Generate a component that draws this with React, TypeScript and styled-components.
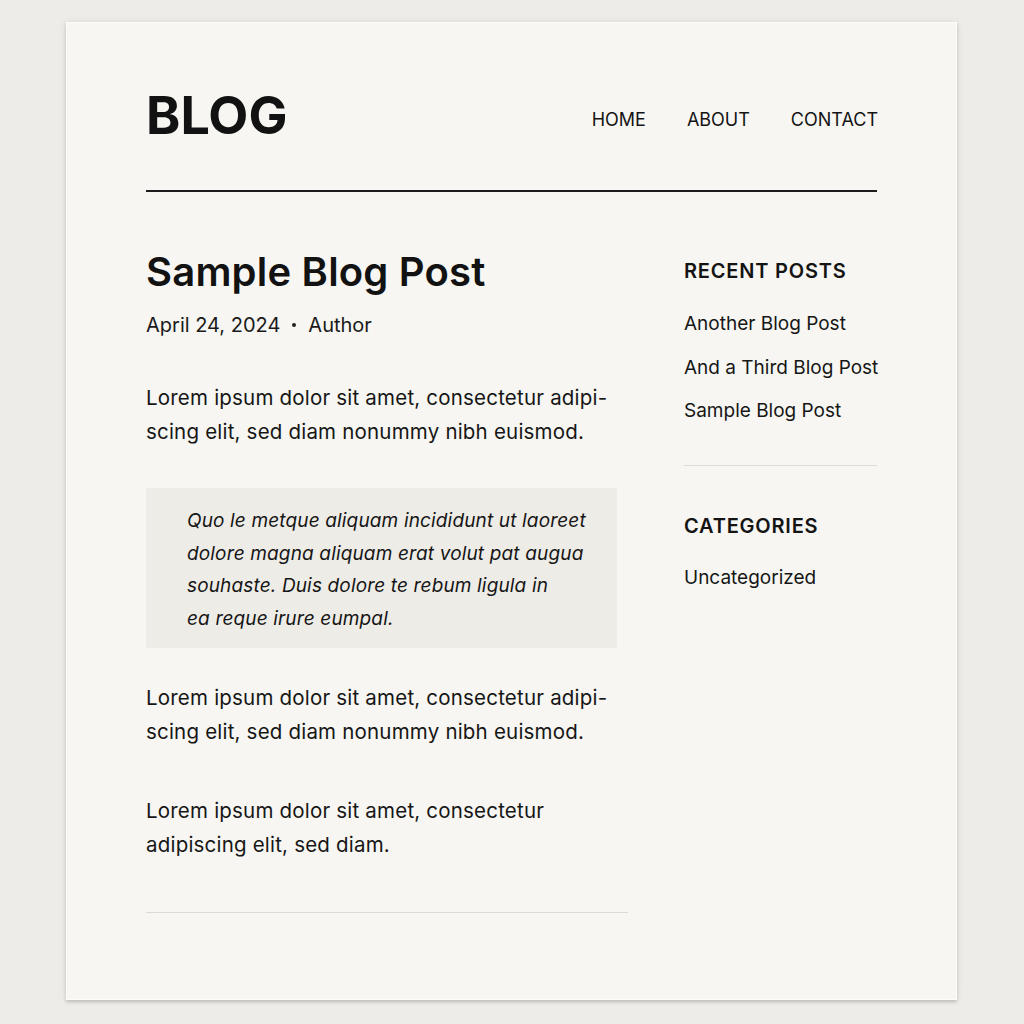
import React from "react";
import styled, { createGlobalStyle } from "styled-components";

const GlobalStyle = createGlobalStyle`
  html, body {
    margin: 0;
    padding: 0;
    background: #eeece8;
  }
  body {
    font-family: Inter, "Noto Sans", "Liberation Sans", sans-serif;
    color: #141414;
    -webkit-font-smoothing: antialiased;
  }
`;

const Page = styled.div`
  padding: 22px 0 24px 66px;
`;

const Card = styled.div`
  box-sizing: border-box;
  width: 891px;
  height: 978px;
  background: #f7f6f2;
  border: 1px solid #fdfdfb;
  box-shadow: 0 2px 3px rgba(60, 55, 45, 0.22), 0 0 8px rgba(60, 55, 45, 0.08);
  padding: 67px 79px 0 79px;
`;

const Header = styled.header`
  display: flex;
  align-items: center;
  justify-content: space-between;
  height: 52px;
  padding-bottom: 48px;
  border-bottom: 2px solid #1c1c1c;
`;

const Logo = styled.h1`
  margin: 0;
  font-size: 52px;
  line-height: 52px;
  font-weight: 700;
  letter-spacing: 0;
  color: #121212;
`;

const Nav = styled.nav`
  display: flex;
  gap: 41px;
  margin-top: 8px;
  margin-right: -1px;
`;

const NavLink = styled.a`
  font-size: 18px;
  line-height: 24px;
  font-weight: 400;
  color: #141414;
  text-decoration: none;
`;

const Layout = styled.div`
  display: grid;
  grid-template-columns: 482px 193px;
  column-gap: 56px;
  padding-top: 56px;
`;

const Article = styled.article`
  display: flex;
  flex-direction: column;
`;

const Title = styled.h2`
  margin: 0 0 15px;
  font-size: 40px;
  line-height: 48px;
  font-weight: 600;
  letter-spacing: 0.2px;
  color: #121212;
`;

const Meta = styled.div`
  display: flex;
  align-items: center;
  gap: 12px;
  margin-bottom: 42px;
  font-size: 20px;
  line-height: 28px;
  color: #1a1a1a;
`;

const Dot = styled.span`
  width: 4px;
  height: 4px;
  border-radius: 50%;
  background: #222;
`;

const Paragraph = styled.p<{ $mb: number }>`
  margin: 0 0 ${(p) => p.$mb}px;
  font-size: 20.5px;
  line-height: 34px;
  letter-spacing: 0.2px;
  color: #161616;
  white-space: nowrap;
`;

const Quote = styled.blockquote`
  margin: 0 0 33px;
  width: 471px;
  box-sizing: border-box;
  padding: 17px 20px 12px 41px;
  background: #eeece7;
  font-size: 19px;
  line-height: 32.7px;
  letter-spacing: 0.15px;
  font-style: italic;
  color: #161616;
  white-space: nowrap;
`;

const EndRule = styled.hr`
  margin: 0;
  border: none;
  border-top: 1px solid #dddad4;
`;

const Sidebar = styled.aside`
  display: flex;
  flex-direction: column;
  padding-top: 9px;
  white-space: nowrap;
`;

const WidgetTitle = styled.h3`
  margin: 0;
  font-size: 20px;
  line-height: 28px;
  font-weight: 600;
  letter-spacing: 0.8px;
  color: #141414;
`;

const LinkList = styled.ul<{ $mt: number }>`
  list-style: none;
  margin: ${(p) => p.$mt}px 0 0;
  padding: 0;
  display: flex;
  flex-direction: column;
  gap: 15.5px;
`;

const SideLink = styled.li`
  font-size: 19px;
  line-height: 28px;
  color: #161616;
`;

const Divider = styled.hr`
  margin: 40px 0 46px;
  border: none;
  border-top: 1px solid #dfdcd6;
`;

const recent = ["Another Blog Post", "And a Third Blog Post", "Sample Blog Post"];

export default function App() {
  return (
    <>
      <GlobalStyle />
      <Page>
        <Card>
          <Header>
            <Logo>BLOG</Logo>
            <Nav>
              <NavLink href="#">HOME</NavLink>
              <NavLink href="#">ABOUT</NavLink>
              <NavLink href="#">CONTACT</NavLink>
            </Nav>
          </Header>
          <Layout>
            <Article>
              <Title>Sample Blog Post</Title>
              <Meta>
                <span>April 24, 2024</span>
                <Dot />
                <span>Author</span>
              </Meta>
              <Paragraph $mb={39}>
                Lorem ipsum dolor sit amet, consectetur adipi-
                <br />
                scing elit, sed diam nonummy nibh euismod.
              </Paragraph>
              <Quote>
                Quo le metque aliquam incididunt ut laoreet
                <br />
                dolore magna aliquam erat volut pat augua
                <br />
                souhaste. Duis dolore te rebum ligula in
                <br />
                ea reque irure eumpal.
              </Quote>
              <Paragraph $mb={45}>
                Lorem ipsum dolor sit amet, consectetur adipi-
                <br />
                scing elit, sed diam nonummy nibh euismod.
              </Paragraph>
              <Paragraph $mb={50}>
                Lorem ipsum dolor sit amet, consectetur
                <br />
                adipiscing elit, sed diam.
              </Paragraph>
              <EndRule />
            </Article>
            <Sidebar>
              <WidgetTitle>RECENT POSTS</WidgetTitle>
              <LinkList $mt={25}>
                {recent.map((t) => (
                  <SideLink key={t}>{t}</SideLink>
                ))}
              </LinkList>
              <Divider />
              <WidgetTitle>CATEGORIES</WidgetTitle>
              <LinkList $mt={24}>
                <SideLink>Uncategorized</SideLink>
              </LinkList>
            </Sidebar>
          </Layout>
        </Card>
      </Page>
    </>
  );
}
